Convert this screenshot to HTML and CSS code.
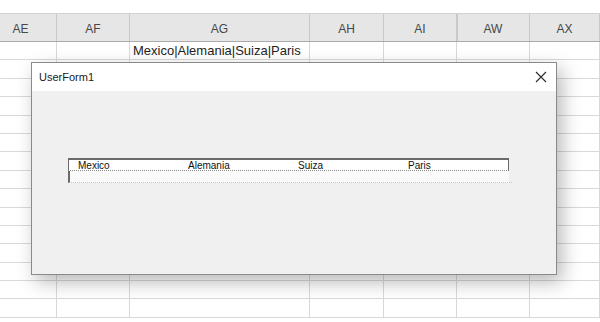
FILE: index.html
```html
<!DOCTYPE html>
<html lang="es">
<head>
  <meta charset="UTF-8">
  <meta name="viewport" content="width=device-width, initial-scale=1.0">
  <title>UserForm1</title>
  <link rel="stylesheet" href="styles.css">
</head>
<body>
  <div class="sheet">
    <div class="formula-gap"></div>
    <div class="grid head">
      <div class="col">AE</div>
      <div class="col">AF</div>
      <div class="col">AG</div>
      <div class="col">AH</div>
      <div class="col">AI</div>
      <div class="col hidden-before">AW</div>
      <div class="col">AX</div>
    </div>
    <div class="grid row">
      <div class="cell"></div><div class="cell"></div>
      <div class="cell text">Mexico|Alemania|Suiza|Paris</div>
      <div class="cell"></div><div class="cell"></div><div class="cell"></div><div class="cell"></div>
    </div>
    <div id="rows"></div>

    <div class="dialog">
      <div class="titlebar">
        <span class="title">UserForm1</span>
        <svg class="close" width="12" height="12" viewBox="0 0 12 12">
          <path d="M1 1 L11 11 M11 1 L1 11" stroke="#2b2b2b" stroke-width="1.1" fill="none"/>
        </svg>
      </div>
      <div class="dialog-body">
        <div class="listbox">
          <div class="lb-head">
            <span>Mexico</span>
            <span>Alemania</span>
            <span>Suiza</span>
            <span>Paris</span>
          </div>
          <div class="lb-row"></div>
        </div>
      </div>
    </div>
  </div>

  <script>
    // filas vacías de la hoja
    const rowsEl = document.getElementById('rows');
    for (let i = 0; i < 14; i++) {
      const r = document.createElement('div');
      r.className = 'grid row';
      for (let c = 0; c < 7; c++) {
        const cell = document.createElement('div');
        cell.className = 'cell';
        r.appendChild(cell);
      }
      rowsEl.appendChild(r);
    }
  </script>
</body>
</html>
```

FILE: styles.css
```css
body { margin: 0; background: #fff; font-family: "Liberation Sans", Arial, sans-serif; overflow: hidden; }
.sheet { position: relative; width: 600px; height: 322px; overflow: hidden; }
.formula-gap { height: 13px; border-bottom: 1px solid #d2d2d2; }
.grid { display: grid; grid-template-columns: 72px 73px 180px 74px 73px 73px 1fr; margin-left: -15px; }
.head { height: 27px; background: #e6e6e6; border-bottom: 1px solid #ababab; }
.col { display: flex; align-items: center; justify-content: center; font-size: 12px; color: #474747; border-right: 1px solid #c9c9c9; padding-top: 2px; }
.hidden-before { box-shadow: inset 2px 0 0 -1px #c9c9c9; }
.row { height: 17.4px; border-bottom: 1px solid #d9d9d9; }
.cell { border-right: 1px solid #d9d9d9; }
.cell.text { font-size: 13px; color: #1e1e1e; padding-left: 3px; line-height: 18px; white-space: nowrap; }

.dialog { position: absolute; left: 31px; top: 62px; width: 524px; height: 211px; background: #f0f0f0; border: 1px solid #8a8a8a; box-shadow: 5px 7px 18px rgba(0,0,0,0.28); display: flex; flex-direction: column; }
.titlebar { height: 28px; background: #fff; display: flex; align-items: center; justify-content: space-between; padding: 0 9px 0 7px; }
.title { font-size: 11px; color: #1a1a1a; }
.dialog-body { padding: 67px 0 0 36px; }
.listbox { width: 441px; background: #fafafa; }
.lb-head { height: 10px; display: grid; grid-template-columns: 110px 110px 110px 1fr; border: 1px solid #6a6a6a; border-top-width: 2px; border-bottom: 1px dotted #8a8a8a; background: #fff; font-size: 10px; line-height: 11px; color: #111; padding-left: 9px; }
.lb-row { height: 11px; border-left: 2px solid #6a6a6a; border-bottom: 1px dotted #c4c4c4; width: 442px; }
```
